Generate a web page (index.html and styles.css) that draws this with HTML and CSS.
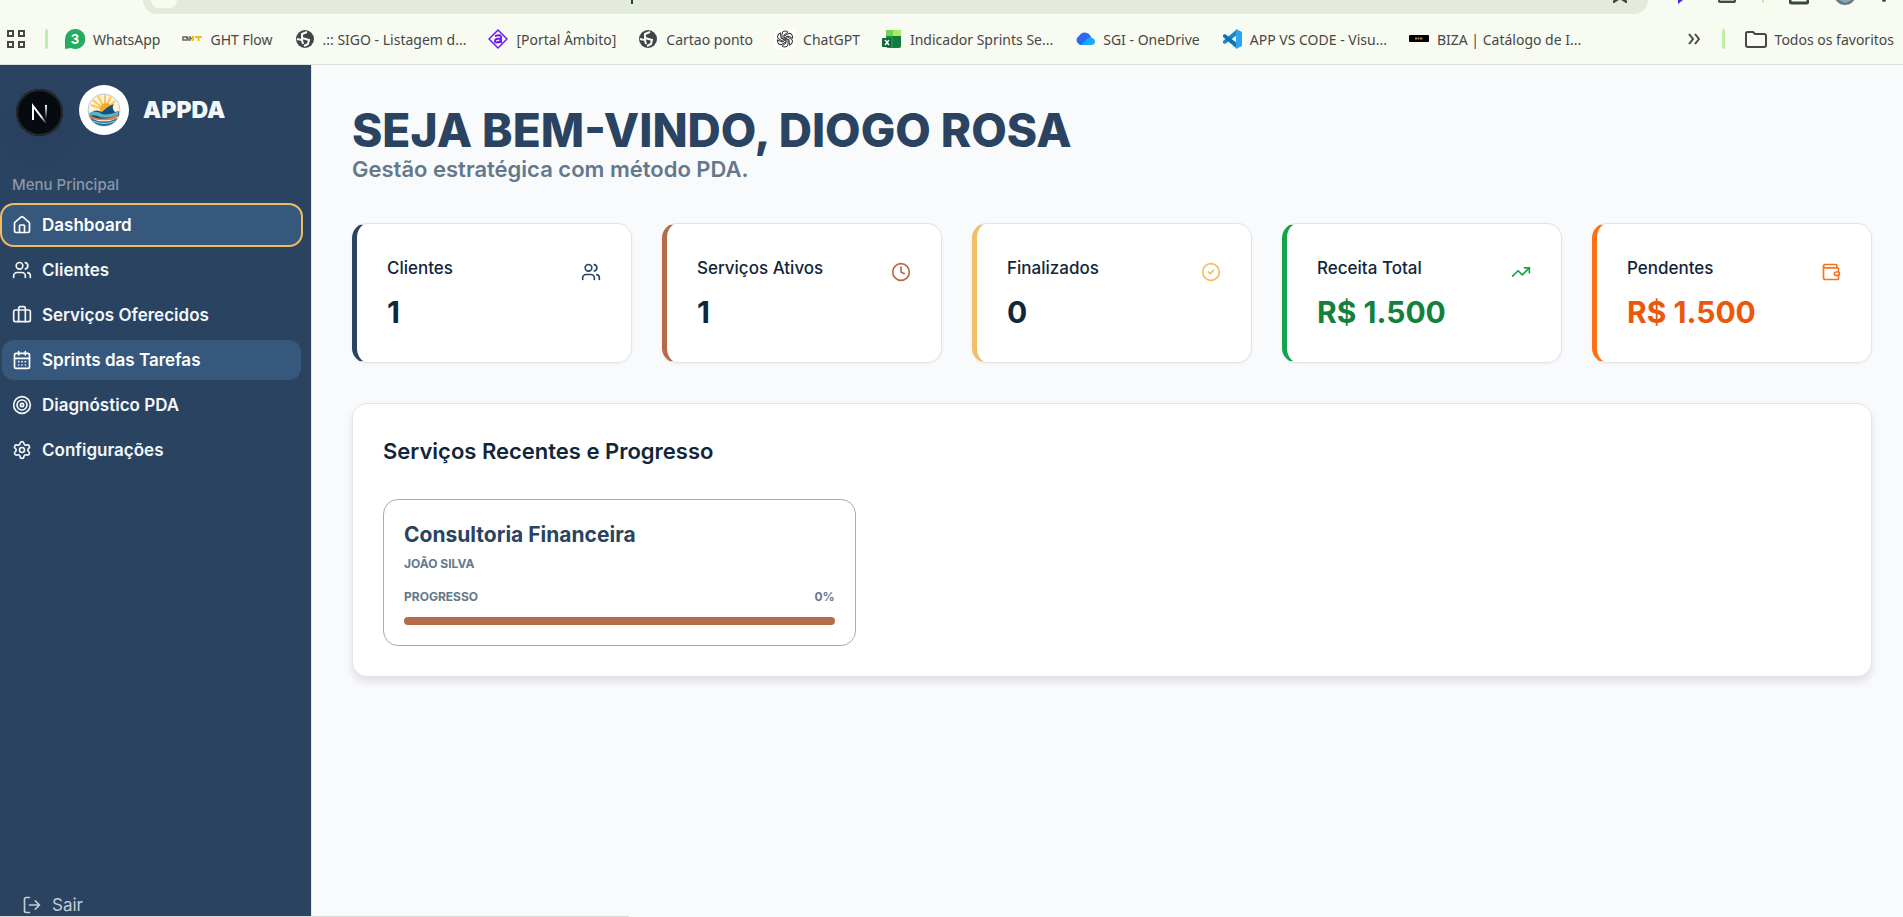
FILE: index.html
```html
<!DOCTYPE html>
<html lang="pt-BR">
<head>
  <meta charset="UTF-8">
  <meta name="viewport" content="width=device-width, initial-scale=1.0">
  <title>APPDA</title>
  <link rel="stylesheet" href="styles.css">
</head>
<body>
  <!-- Barra do navegador -->
  <header class="browser">
    <div class="toolbar">
      <div class="address">
        <span class="address-icon"></span>
        <span class="address-tail"></span>
        <svg class="address-star" width="16" height="3" viewBox="0 0 16 3" fill="none" stroke="#474747" stroke-width="2"><path d="M3 -3L2 2L8 -2L14 2L13 -3"/></svg>
      </div>
      <div class="tools">
        <svg width="20" height="10" viewBox="0 0 20 10"><path d="M6 0h5l-5 4z" fill="#3a2ff0"/></svg>
        <svg width="20" height="10" viewBox="0 0 20 10"><path d="M2 -4v5q0 1 1 1h14q1 0 1 -1v-5" fill="#a9bd9d" stroke="#474747" stroke-width="2"/></svg>
        <span class="tool-sep"></span>
        <svg width="20" height="10" viewBox="0 0 20 10"><path d="M1 -4v5q0 2 2 2h14q2 0 2 -2v-5" fill="none" stroke="#3b4a36" stroke-width="3"/></svg>
        <svg width="22" height="10" viewBox="0 0 22 10"><circle cx="11" cy="-6" r="11" fill="#5f7d88"/><path d="M5 0l6 3 7-3v-2H5z" fill="#8fa9ad"/></svg>
        <svg width="6" height="10" viewBox="0 0 6 10"><circle cx="3" cy="0" r="2" fill="#474747"/></svg>
      </div>
    </div>

    <nav class="bookmarks">
      <button class="apps" aria-label="Apps">
        <svg width="18" height="18" viewBox="0 0 18 18" fill="none" stroke="#474747" stroke-width="2"><path d="M1 1h5v5H1zM12 1h5v5h-5zM1 12h5v5H1zM12 12h5v5h-5z"/></svg>
      </button>
      <span class="sep"></span>
      <div class="links">
        <a href="#"><svg width="20" height="20" viewBox="0 0 20 20"><path d="M10 0a10 10 0 1 1-4 19L0 20V10A10 10 0 0 1 10 0z" fill="#22ad62"/><text class="badge-num" x="10" y="15" text-anchor="middle">3</text></svg>WhatsApp</a>
        <a href="#"><svg width="20" height="20" viewBox="0 0 20 20" fill="none" stroke-width="1.500"><path d="M6 8H1v3h5v-2H4M8 7v5M8 9.500h3" stroke="#666"/><path d="M11 7v5M13 8h7M16.500 8v4" stroke="#f5b921" stroke-width="2"/></svg>GHT Flow</a>
        <a href="#"><svg width="20" height="20" viewBox="0 0 20 20"><circle cx="10" cy="10" r="9" fill="#414449"/><path d="M12 3L7 5v4l7 2-1 4-4 2M2 10l5 1 1 4" fill="none" stroke="#f8fbf1" stroke-width="2"/></svg>.:: SIGO - Listagem d...</a>
        <a href="#"><svg width="20" height="20" viewBox="0 0 20 20" fill="none" stroke="#6d1cf5" stroke-width="1.500"><path d="M10 1l9 9-9 9-9-9z" stroke-linejoin="round"/><path d="M7 7q6-2 6 1v6M13 10q-6-1-6 2t6 0" stroke-width="2"/></svg>[Portal Âmbito]</a>
        <a href="#"><svg width="20" height="20" viewBox="0 0 20 20"><circle cx="10" cy="10" r="9" fill="#414449"/><path d="M12 3L7 5v4l7 2-1 4-4 2M2 10l5 1 1 4" fill="none" stroke="#f8fbf1" stroke-width="2"/></svg>Cartao ponto</a>
        <a href="#"><svg width="20" height="20" viewBox="0 0 20 20"><rect width="20" height="20" rx="3" fill="#fff"/><g fill="none" stroke="#333"><path d="M7 10V5q0-3 3-3 2 0 3 1L9 6v5"/><path d="M7 10V5q0-3 3-3 2 0 3 1L9 6v5" transform="rotate(60 10 10)"/><path d="M7 10V5q0-3 3-3 2 0 3 1L9 6v5" transform="rotate(120 10 10)"/><path d="M7 10V5q0-3 3-3 2 0 3 1L9 6v5" transform="rotate(180 10 10)"/><path d="M7 10V5q0-3 3-3 2 0 3 1L9 6v5" transform="rotate(240 10 10)"/><path d="M7 10V5q0-3 3-3 2 0 3 1L9 6v5" transform="rotate(300 10 10)"/></g></svg>ChatGPT</a>
        <a href="#"><svg width="20" height="20" viewBox="0 0 20 20"><path d="M4 1h7v7H4z" fill="#6fd64e"/><path d="M11 1h8v7h-8z" fill="#a6ec64"/><path d="M4 7h7v12H6q-2 0-2-2z" fill="#1e8f46"/><path d="M11 7h8v10q0 2-2 2h-6z" fill="#147a3d"/><rect x="0" y="9" width="9" height="9" rx="1" fill="#0d6636"/><path d="M3 11l4 5M7 11l-4 5" stroke="#fff" stroke-width="1.500"/></svg>Indicador Sprints Se...</a>
        <a href="#"><svg width="20" height="20" viewBox="0 0 20 20"><path d="M5 16a5 5 0 0 1-1-9q3-5 8-3 4 2 4 5l-8 7z" fill="#2a6af0"/><path d="M6 16l7-7q5-2 7 3 0 4-4 4z" fill="#15a8fb"/></svg>SGI - OneDrive</a>
        <a href="#"><svg width="20" height="20" viewBox="0 0 20 20"><path d="M14 1L1 12v2l2 1L15 6z" fill="#1787cf"/><path d="M14 19L1 8V6l2-1 12 9z" fill="#0f74bb"/><path d="M14 0l6 3v14l-6 3z" fill="#2ba4ee"/></svg>APP VS CODE - Visu...</a>
        <a href="#"><svg width="20" height="20" viewBox="0 0 20 20"><rect y="6" width="20" height="7" rx="1" fill="#000"/><path d="M6 9.500h8" stroke="#b8811d" stroke-width="2" stroke-dasharray="2 .500"/></svg>BIZA | Catálogo de I...</a>
      </div>
      <button class="more" aria-label="Mais favoritos">
        <svg width="12" height="12" viewBox="0 0 12 12" fill="none" stroke="#474747" stroke-width="2"><path d="M1 1l4 5-4 5M7 1l4 5-4 5"/></svg>
      </button>
      <span class="sep sep-end"></span>
      <a href="#" class="all"><svg width="22" height="18" viewBox="0 0 22 18" fill="none" stroke="#474747" stroke-width="2"><path d="M3 2h5l2 2h9q2 0 2 2v9q0 2-2 2H3q-2 0-2-2V3q0-1 2-1z"/></svg>Todos os favoritos</a>
    </nav>
  </header>

  <div class="app">
    <aside class="sidebar">
      <div class="brand">
        <span class="logo">
          <svg width="50" height="50" viewBox="0 0 50 50">
            <circle cx="25" cy="25" r="16" fill="#fdf3d9" stroke="#b9ccd2"/>
            <path d="M26 25L12 20M26 25L14 15M26 25L19 11M26 25V10M26 25l6-14M26 25l10-9" stroke="#f9c75e" stroke-width="2"/>
            <circle cx="27" cy="24" r="6" fill="#f7a823"/>
            <path d="M10 29q7-6 13-2 6-6 12-8-3 4 1 8l4-1v5l-15 4-14-2z" fill="#15527a"/>
            <path d="M10 28q8-3 13 1 6 2 17-3l-1 4q-10 4-18 2-5-3-11-1z" fill="#5bb3c5"/>
            <path d="M10 30q14 8 30-1-2 6-10 6-12 1-19-2z" fill="#e97b3c"/>
            <path d="M11 33q14 7 28 0-5 8-14 8t-14-8z" fill="#1f6d9b"/>
            <path d="M14 36q11 5 22 0" stroke="#9ed2dc" fill="none"/>
          </svg>
        </span>
        <span class="brand-name">APPDA</span>
      </div>

      <p class="menu-label">Menu Principal</p>
      <nav class="menu">
        <a href="#" class="active focused"><svg class="icon" viewBox="0 0 24 24"><path d="M15 21v-8a1 1 0 0 0-1-1h-4a1 1 0 0 0-1 1v8"/><path d="M3 10a2 2 0 0 1 .709-1.528l7-5.999a2 2 0 0 1 2.582 0l7 5.999A2 2 0 0 1 21 10v9a2 2 0 0 1-2 2H5a2 2 0 0 1-2-2z"/></svg>Dashboard</a>
        <a href="#"><svg class="icon" viewBox="0 0 24 24"><path d="M16 21v-2a4 4 0 0 0-4-4H6a4 4 0 0 0-4 4v2"/><circle cx="9" cy="7" r="4"/><path d="M22 21v-2a4 4 0 0 0-3-3.87"/><path d="M16 3.13a4 4 0 0 1 0 7.75"/></svg>Clientes</a>
        <a href="#"><svg class="icon" viewBox="0 0 24 24"><path d="M16 20V4a2 2 0 0 0-2-2h-4a2 2 0 0 0-2 2v16"/><rect width="20" height="14" x="2" y="6" rx="2"/></svg>Serviços Oferecidos</a>
        <a href="#" class="active"><svg class="icon" viewBox="0 0 24 24"><path d="M8 2v4M16 2v4"/><rect width="18" height="18" x="3" y="4" rx="2"/><path d="M3 10h18M8 14h.01M12 14h.01M16 14h.01M8 18h.01M12 18h.01M16 18h.01"/></svg>Sprints das Tarefas</a>
        <a href="#"><svg class="icon" viewBox="0 0 24 24"><circle cx="12" cy="12" r="10"/><circle cx="12" cy="12" r="6"/><circle cx="12" cy="12" r="2"/></svg>Diagnóstico PDA</a>
        <a href="#"><svg class="icon" viewBox="0 0 24 24"><path d="M9.671 4.136a2.34 2.34 0 0 1 4.659 0 2.34 2.34 0 0 0 3.319 1.915 2.34 2.34 0 0 1 2.33 4.033 2.34 2.34 0 0 0 0 3.831 2.34 2.34 0 0 1-2.33 4.033 2.34 2.34 0 0 0-3.319 1.915 2.34 2.34 0 0 1-4.659 0 2.34 2.34 0 0 0-3.32-1.915 2.34 2.34 0 0 1-2.33-4.033 2.34 2.34 0 0 0 0-3.831A2.34 2.34 0 0 1 6.35 6.051a2.34 2.34 0 0 0 3.319-1.915"/><circle cx="12" cy="12" r="3"/></svg>Configurações</a>
      </nav>

      <button class="logout"><svg class="icon" viewBox="0 0 24 24"><path d="M9 21H5a2 2 0 0 1-2-2V5a2 2 0 0 1 2-2h4"/><path d="M16 17l5-5-5-5M21 12H9"/></svg>Sair</button>
    </aside>

    <main class="content">
      <h1>SEJA BEM-VINDO, DIOGO ROSA</h1>
      <p class="subtitle">Gestão estratégica com método PDA.</p>

      <section class="stats">
        <div class="stat navy">
          <div class="stat-head"><h2>Clientes</h2><svg class="icon" viewBox="0 0 24 24"><path d="M16 21v-2a4 4 0 0 0-4-4H6a4 4 0 0 0-4 4v2"/><circle cx="9" cy="7" r="4"/><path d="M22 21v-2a4 4 0 0 0-3-3.87"/><path d="M16 3.13a4 4 0 0 1 0 7.75"/></svg></div>
          <p class="value">1</p>
        </div>
        <div class="stat rust">
          <div class="stat-head"><h2>Serviços Ativos</h2><svg class="icon" viewBox="0 0 24 24"><circle cx="12" cy="12" r="10"/><path d="M12 6v6l4 2"/></svg></div>
          <p class="value">1</p>
        </div>
        <div class="stat gold">
          <div class="stat-head"><h2>Finalizados</h2><svg class="icon" viewBox="0 0 24 24"><circle cx="12" cy="12" r="10"/><path d="m9 12 2 2 4-4"/></svg></div>
          <p class="value">0</p>
        </div>
        <div class="stat green">
          <div class="stat-head"><h2>Receita Total</h2><svg class="icon" viewBox="0 0 24 24"><path d="M16 7h6v6"/><path d="m22 7-8.500 8.500-5-5L2 17"/></svg></div>
          <p class="value">R$ 1.500</p>
        </div>
        <div class="stat orange">
          <div class="stat-head"><h2>Pendentes</h2><svg class="icon" viewBox="0 0 24 24"><path d="M19 7V4a1 1 0 0 0-1-1H5a2 2 0 0 0 0 4h15a1 1 0 0 1 1 1v4h-3a2 2 0 0 0 0 4h3a1 1 0 0 0 1-1v-2a1 1 0 0 0-1-1"/><path d="M3 5v14a2 2 0 0 0 2 2h15a1 1 0 0 0 1-1v-4"/></svg></div>
          <p class="value">R$ 1.500</p>
        </div>
      </section>

      <section class="panel">
        <h2>Serviços Recentes e Progresso</h2>
        <div class="services">
          <article class="service">
            <h3>Consultoria Financeira</h3>
            <p class="client">JOÃO SILVA</p>
            <div class="progress-row"><span>PROGRESSO</span><span>0%</span></div>
            <div class="bar"></div>
          </article>
        </div>
      </section>
    </main>
  </div>

  <button class="dev-badge" aria-label="Dev Tools">
    <svg width="47" height="47" viewBox="0 0 47 47" fill="none">
      <defs>
        <linearGradient id="diag" x1="20" y1="20" x2="31" y2="34" gradientUnits="userSpaceOnUse"><stop offset=".5" stop-color="#fff"/><stop offset="1" stop-color="#fff" stop-opacity="0"/></linearGradient>
        <linearGradient id="stem" x1="30" y1="16" x2="30" y2="30" gradientUnits="userSpaceOnUse"><stop stop-color="#fff"/><stop offset="1" stop-color="#fff" stop-opacity="0"/></linearGradient>
      </defs>
      <path d="M17 31V17l13 17" stroke="url(#diag)" stroke-width="2"/>
      <path d="M29 16h2v14h-2z" fill="url(#stem)"/>
    </svg>
  </button>
  <div class="status-bubble"></div>
</body>
</html>
```
FILE: styles.css
```css
* {
  box-sizing: border-box;
}

body {
  margin: 0;
  height: 100vh;
  display: flex;
  flex-direction: column;
  overflow: hidden;
  font-family: Inter, sans-serif;
  background: #f9fafc;
  color: #12263a;
}

h1, h2, h3, p {
  margin: 0;
}

a {
  color: inherit;
  text-decoration: none;
}

button {
  border: none;
  background: none;
  padding: 0;
  font: inherit;
  color: inherit;
  cursor: pointer;
}

svg {
  display: block;
  flex-shrink: 0;
}

.icon {
  width: 20px;
  height: 20px;
  fill: none;
  stroke: currentColor;
  stroke-width: 2;
  stroke-linecap: round;
  stroke-linejoin: round;
}

/* navegador */
.browser {
  flex-shrink: 0;
  height: 65px;
  background: #f8fbf1;
  border-bottom: 1px solid #dde2d8;
  font-family: "Noto Sans", sans-serif;
  font-size: 14px;
  color: #474747;
}

.toolbar {
  display: flex;
  justify-content: space-between;
  height: 14px;
  padding: 0 16px 0 143px;
}

.address {
  display: flex;
  flex: 1;
  justify-content: space-between;
  height: 14px;
  padding: 0 20px 0 8px;
  background: #e3ecdc;
  border-radius: 0 0 18px 18px;
}

.address-icon {
  width: 26px;
  height: 8px;
  background: #f8fbf1;
  border-radius: 0 0 13px 13px;
}

.address-tail {
  width: 2px;
  height: 4px;
  margin-right: 526px;
  background: #2c3a55;
}

.tools {
  display: flex;
  gap: 25px;
  padding-left: 24px;
}

.tool-sep {
  width: 2px;
  height: 3px;
  background: #bdf0a8;
}

.bookmarks {
  display: flex;
  align-items: center;
  height: 50px;
  padding: 0 9px 0 7px;
}

.bookmarks a {
  display: flex;
  align-items: center;
  gap: 8px;
  white-space: nowrap;
}

.badge-num {
  font: bold 13px Inter, sans-serif;
  fill: #fff;
}

.sep {
  width: 3px;
  height: 20px;
  margin: 0 17px 0 20px;
  border-radius: 2px;
  background: #bdf0a8;
}

.sep-end {
  margin: 0 20px 0 22px;
}

.links {
  display: flex;
  flex: 1;
  gap: 22px;
}

/* app */
.app {
  display: flex;
  flex: 1;
  min-height: 0;
}

.sidebar {
  display: flex;
  flex-direction: column;
  flex-shrink: 0;
  width: 312px;
  padding: 20px 10px 0 2px;
  background: #2a4360;
  border-right: 1px solid #e2e6ea;
  color: #f4f7fa;
}

.brand {
  display: flex;
  align-items: center;
  gap: 14px;
  padding-left: 77px;
}

.logo {
  width: 50px;
  height: 50px;
  border-radius: 50%;
  background: #fff;
}

.brand-name {
  font-size: 23px;
  font-weight: 900;
}

.menu-label {
  margin: 40px 0 10px;
  padding-left: 10px;
  font-size: 15px;
  line-height: 20px;
  font-weight: 500;
  color: #8b97a6;
}

.menu {
  display: flex;
  flex-direction: column;
  gap: 5px;
}

.menu a {
  display: flex;
  align-items: center;
  gap: 10px;
  height: 40px;
  padding: 0 10px;
  border-radius: 12px;
  font-size: 17px;
  font-weight: 600;
}

.menu .active {
  background: #35587c;
  color: #fff;
}

.menu .focused {
  box-shadow: 0 0 0 2px #f1bd62;
}

.logout {
  display: flex;
  align-items: center;
  gap: 10px;
  height: 40px;
  margin-top: auto;
  margin-bottom: -8px;
  padding-left: 20px;
  font-size: 17px;
  color: #c4ccd5;
}

.content {
  flex: 1;
  min-width: 0;
  padding: 40px 31px 40px 40px;
}

h1 {
  font-size: 46px;
  line-height: 50px;
  font-weight: 800;
  color: #2a4360;
}

.subtitle {
  font-size: 22px;
  line-height: 28px;
  font-weight: 600;
  color: #64788c;
}

.stats {
  display: grid;
  grid-template-columns: repeat(5, 1fr);
  gap: 30px;
  margin: 40px 0;
}

.stat {
  height: 140px;
  padding: 30px;
  background: #fff;
  border: 1px solid #e0e4ea;
  border-left-width: 5px;
  border-radius: 15px;
  box-shadow: 0 1px 3px rgba(0, 0, 0, 0.06);
}

.stat-head {
  display: flex;
  justify-content: space-between;
  align-items: center;
}

.stat h2 {
  font-size: 17px;
  line-height: 28px;
  font-weight: 500;
  padding-bottom: 8px;
}

.value {
  margin-top: 2px;
  font-size: 30px;
  line-height: 40px;
  font-weight: 700;
}

.navy { border-left-color: #2a4360; }
.navy .icon { color: #2a4360; }
.rust { border-left-color: #b56a4a; }
.rust .icon { color: #b56a4a; }
.gold { border-left-color: #f1bf68; }
.gold .icon { color: #f1bf68; }
.green { border-left-color: #16a34a; }
.green .icon { color: #16a34a; }
.green .value { color: #15803d; }
.orange { border-left-color: #f97316; }
.orange .icon { color: #f97316; }
.orange .value { color: #ea580c; }

.panel {
  padding: 30px;
  background: #fff;
  border: 1px solid #e0e4ea;
  border-radius: 15px;
  box-shadow: 0 5px 8px rgba(0, 0, 0, 0.1);
}

.panel h2 {
  font-size: 22px;
  line-height: 35px;
  font-weight: 600;
}

.services {
  display: grid;
  grid-template-columns: repeat(3, 1fr);
  gap: 20px;
  margin-top: 30px;
}

.service {
  padding: 20px;
  border: 1px solid #a0adbb;
  border-radius: 15px;
}

.service h3 {
  font-size: 21px;
  line-height: 30px;
  font-weight: 700;
  color: #2a4360;
}

.client, .progress-row {
  font-size: 12px;
  line-height: 18px;
  font-weight: 700;
  color: #64788c;
}

.client {
  margin-top: 5px;
}

.progress-row {
  display: flex;
  justify-content: space-between;
  margin: 15px 0 11px;
}

.bar {
  height: 8px;
  border-radius: 4px;
  background: #b56a4a;
}

/* sobreposições */
.dev-badge {
  position: absolute;
  left: 16px;
  top: 89px;
  width: 47px;
  height: 47px;
  border-radius: 50%;
  background: #060b12;
  box-shadow: inset 0 0 0 2px #26282c, 0 16px 32px -8px rgba(0, 0, 0, 0.1);
}

.status-bubble {
  position: absolute;
  left: 0;
  bottom: 0;
  width: 629px;
  height: 1px;
  border-radius: 0 2px 0 0;
  background: #d5d9d8;
}
```
